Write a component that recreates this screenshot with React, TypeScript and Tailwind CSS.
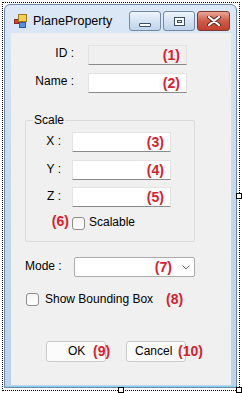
import React from "react";

const RED = "text-[#d8202f]";

const Tag = ({ n, className = "" }: { n: string; className?: string }) => (
  <span className={`font-bold text-[14px] leading-none ${RED} ${className}`}>({n})</span>
);

const TextBox = ({ n, readOnly = false, w = "w-[99px]" }: { n: string; readOnly?: boolean; w?: string }) => (
  <div
    className={`${w} h-[20px] flex items-center justify-end pr-[6px] border border-[#e3e3e3] border-b-[#8a8a8a] ${
      readOnly ? "bg-[#f0f0f0]" : "bg-white"
    }`}
  >
    <Tag n={n} />
  </div>
);

const CheckBox = () => (
  <div className="w-[13px] h-[13px] shrink-0 rounded-[3px] border border-[#8e8e8e] bg-gradient-to-b from-[#f4f4f4] to-white" />
);

const AppIcon = () => (
  <svg width="14" height="14" viewBox="0 0 14 14">
    <rect x="0.5" y="5.5" width="4" height="4" fill="#e03c2c" stroke="#8a2a1e" strokeWidth="1" />
    <rect x="4.5" y="0.5" width="8" height="7" fill="#f7d04a" stroke="#9a7a20" strokeWidth="1" />
    <rect x="5.5" y="8.5" width="6" height="5" fill="#5b8fe0" stroke="#2d5aa0" strokeWidth="1" />
  </svg>
);

const CaptionButton = ({ kind }: { kind: "min" | "max" | "close" }) => {
  if (kind === "close") {
    return (
      <div className="w-[33px] h-[20px] rounded-[3px] border border-[#7d3a33] bg-gradient-to-b from-[#e9a596] via-[#cf5a47] to-[#c2402e] flex items-center justify-center">
        <svg width="14" height="10" viewBox="0 0 14 10">
          <path d="M2 1 L12 9 M12 1 L2 9" stroke="#5a2a24" strokeWidth="4" strokeLinecap="round" />
          <path d="M2 1 L12 9 M12 1 L2 9" stroke="#ffffff" strokeWidth="2.2" strokeLinecap="round" />
        </svg>
      </div>
    );
  }
  return (
    <div className="w-[32px] h-[20px] rounded-[3px] border border-[#7288a6] bg-gradient-to-b from-[#eef4fb] via-[#d6e3f3] to-[#bfd3ec] flex items-center justify-center">
      {kind === "min" ? (
        <div className="mt-[7px] w-[12px] h-[4px] bg-white border border-[#3c4d66] rounded-[1px]" />
      ) : (
        <div className="w-[11px] h-[9px] border border-[#3c4d66] bg-white flex items-center justify-center">
          <div className="w-[5px] h-[3px] border border-[#3c4d66] bg-[#dfe8f4]" />
        </div>
      )}
    </div>
  );
};

const Handle = ({ className }: { className: string }) => (
  <div className={`absolute w-[6px] h-[6px] bg-white border border-black ${className}`} />
);

const App = () => {
  return (
    <div
      className="relative w-[242px] h-[393px] bg-white p-[2px] overflow-hidden text-[12px] text-black"
      style={{ fontFamily: '"Liberation Sans", Arial, sans-serif' }}
    >
      <div className="w-[238px] h-[389px] border border-dotted border-black p-[1px]">
        {/* window */}
        <div className="w-[233px] h-[384px] border border-[#6f88a6] rounded-t-[6px] bg-gradient-to-b from-[#dce8f6] via-[#c4d8ee] to-[#bcd3eb] flex flex-col">
          {/* title bar */}
          <div className="h-[28px] flex items-start">
            <div className="ml-[9px] mt-[9px]">
              <AppIcon />
            </div>
            <span className="ml-[5px] mt-[9px] leading-[14px] text-[12.5px]">PlaneProperty</span>
            <div className="ml-auto mr-[6px] mt-[6px] flex gap-[2px]">
              <CaptionButton kind="min" />
              <CaptionButton kind="max" />
              <CaptionButton kind="close" />
            </div>
          </div>

          {/* client area */}
          <div className="ml-[6px] w-[220px] h-[352px] bg-[#f0f0f0] flex flex-col">
            <div className="mt-[12px] flex items-center">
              <span className="w-[63px] text-right -mt-[4px]">ID :</span>
              <div className="ml-[14px]">
                <TextBox n="1" readOnly />
              </div>
            </div>
            <div className="mt-[8px] flex items-center">
              <span className="w-[63px] text-right -mt-[4px]">Name :</span>
              <div className="ml-[14px]">
                <TextBox n="2" />
              </div>
            </div>

            {/* Scale group */}
            <div className="relative ml-[14px] mt-[27px] w-[170px] h-[122px] border border-[#dadada] rounded-[2px] pt-[11px]">
              <span className="absolute left-[7px] -top-[9px] px-[1px] bg-[#f0f0f0] leading-[16px]">Scale</span>
              {["3", "4", "5"].map((n, i) => (
                <div key={n} className={`flex items-center ${i === 0 ? "" : i === 1 ? "mt-[8px]" : "mt-[7px]"}`}>
                  <span className="w-[35px] text-right -mt-[2px]">{["X", "Y", "Z"][i]} :</span>
                  <div className="ml-[11px]">
                    <TextBox n={n} />
                  </div>
                </div>
              ))}
              <div className="mt-[7px] flex items-center">
                <div className="w-[43px] flex justify-end -mt-[3px]">
                  <Tag n="6" />
                </div>
                <div className="ml-[3px] mt-[1px]">
                  <CheckBox />
                </div>
                <span className="ml-[4px] -mt-[1px]">Scalable</span>
              </div>
            </div>

            {/* Mode */}
            <div className="mt-[15px] ml-[14px] flex items-center">
              <span className="w-[49px] -mt-[3px]">Mode :</span>
              <div className="w-[121px] h-[20px] bg-white border border-[#acacac] rounded-[2px] flex items-center justify-end pr-[4px]">
                <Tag n="7" />
                <svg className="ml-[10px]" width="8" height="5" viewBox="0 0 8 5">
                  <path d="M0.5 0.5 L4 4 L7.5 0.5" fill="none" stroke="#707070" strokeWidth="1" />
                </svg>
              </div>
            </div>

            {/* Show bounding box */}
            <div className="mt-[16px] ml-[15px] flex items-center h-[13px]">
              <CheckBox />
              <span className="ml-[6px] -mt-[2px]">Show Bounding Box</span>
              <Tag n="8" className="ml-[13px] -mt-[2px]" />
            </div>

            {/* buttons */}
            <div className="mt-[35px] ml-[35px] flex">
              <div className="relative w-[60px] h-[21px] bg-[#fbfbfb] border border-[#c9c9c9] rounded-[3px] flex items-center">
                <span className="ml-[21px] -mt-[2px]">OK</span>
                <Tag n="9" className="absolute left-[46px] top-[2px]" />
              </div>
              <div className="relative ml-[20px] w-[60px] h-[21px] bg-[#fbfbfb] border border-[#c9c9c9] rounded-[3px] flex items-center">
                <span className="ml-[8px] -mt-[2px]">Cancel</span>
                <Tag n="10" className="absolute left-[51px] top-[2px]" />
              </div>
            </div>
          </div>
          <div className="mt-[1px] h-[1px] bg-[#7fd4f0]" />
        </div>
      </div>

      <Handle className="left-[236px] top-[193px]" />
      <Handle className="left-[118px] top-[387px]" />
      <Handle className="left-[236px] top-[387px]" />
    </div>
  );
};

export default App;
